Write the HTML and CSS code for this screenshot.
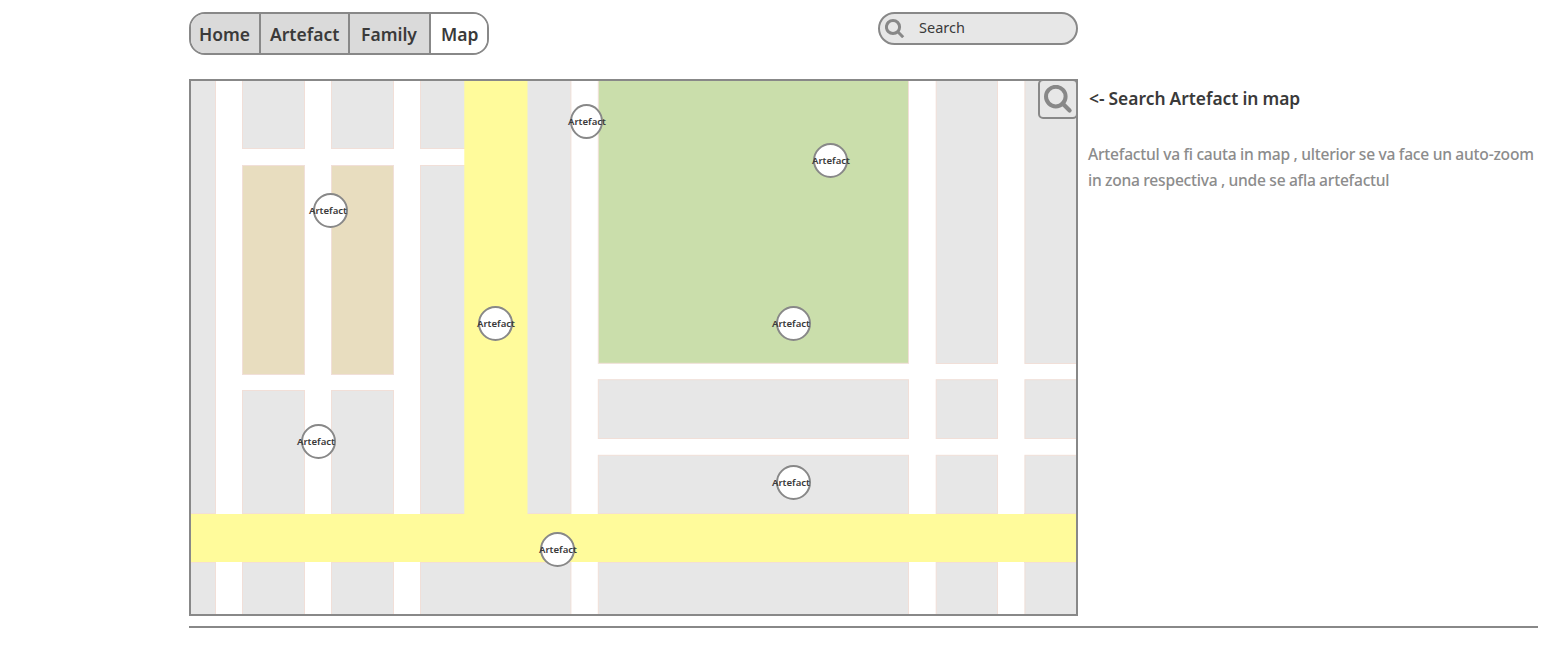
FILE: index.html
```
<!DOCTYPE html>
<html lang="ro">
<head>
<meta charset="utf-8">
<title>Map</title>
<link rel="stylesheet" href="styles.css">
</head>
<body>
<main class="page">
  <header class="topbar">
    <nav class="tabs">
      <a class="tab tab-home"><span>Home</span></a>
      <a class="tab tab-artefact"><span>Artefact</span></a>
      <a class="tab tab-family"><span>Family</span></a>
      <a class="tab tab-map active"><span>Map</span></a>
    </nav>
    <div class="search">
      <svg class="search-icon" viewBox="0 0 20 20"><circle cx="8" cy="9" r="6.6" stroke-width="3"/><path d="M12.8 13.8L18.2 19.2" stroke-width="3"/></svg>
      <span>Search</span>
    </div>
  </header>
  <section class="content">
    <div class="map">
      <svg class="streets" viewBox="0 0 885 533">
        <g class="block">
          <rect x="-1" y="-1" width="25.5" height="535"/>
          <rect x="51.5" y="-1" width="62" height="68.5"/>
          <rect x="140.5" y="-1" width="62" height="68.5"/>
          <rect x="229.5" y="-1" width="62" height="68.5"/>
          <rect x="51.5" y="309.5" width="62" height="225"/>
          <rect x="140.5" y="309.5" width="62" height="225"/>
          <rect x="229.5" y="84.5" width="62" height="348"/>
          <rect x="320.5" y="-1" width="59.4" height="433.5"/>
          <rect x="229.5" y="481.5" width="150.4" height="53"/>
          <rect x="407.3" y="298.7" width="310.2" height="58.8"/>
          <rect x="407.3" y="374.3" width="310.2" height="160"/>
          <rect x="745.2" y="-1" width="61.3" height="283.5"/>
          <rect x="745.2" y="298.7" width="61.3" height="58.8"/>
          <rect x="745.2" y="374.3" width="61.3" height="160"/>
          <rect x="833.9" y="-1" width="60" height="283.5"/>
          <rect x="833.9" y="298.7" width="60" height="58.8"/>
          <rect x="833.9" y="374.3" width="60" height="160"/>
        </g>
        <g class="block square"><rect x="51.5" y="84.5" width="62" height="209"/><rect x="140.5" y="84.5" width="62" height="209"/></g>
        <rect class="block park" x="407.3" y="-1" width="310.2" height="283.3"/>
        <path class="road-edge" d="M0 432.5H25M51 432.5H114M140 432.5H203M229 432.5H380M407 432.5H718M745 432.5H807M833 432.5H885M0 481.5H25M51 481.5H114M140 481.5H203M229 481.5H380M407 481.5H718M745 481.5H807M833 481.5H885"/>
        <path class="avenue" d="M273.3 0H336.5V433H885V481H0V433H273.3Z"/>
      </svg>
      <span class="pin p1"><b>Artefact</b></span>
      <span class="pin p2"><b>Artefact</b></span>
      <span class="pin p3"><b>Artefact</b></span>
      <span class="pin p4"><b>Artefact</b></span>
      <span class="pin p5"><b>Artefact</b></span>
      <span class="pin p6"><b>Artefact</b></span>
      <span class="pin p7"><b>Artefact</b></span>
      <span class="pin p8"><b>Artefact</b></span>
      <button class="map-search" aria-label="Search"><svg viewBox="0 0 30 30"><circle cx="11.8" cy="11.6" r="9.8" stroke-width="4"/><path d="M18.6 18.4L25.6 25.4" stroke-width="4.2" stroke-linecap="round"/></svg></button>
    </div>
    <aside class="notes">
      <h1>&lt;- Search Artefact in map</h1>
      <p><span class="line line-1">Artefactul va fi cauta in map , ulterior se va face un auto-zoom</span><span class="line line-2">in zona respectiva , unde se afla artefactul</span></p>
    </aside>
  </section>
  <hr class="rule">
</main>
</body>
</html>
```

FILE: styles.css
```
* { box-sizing: border-box; }
body {
  margin: 0;
  background: #fff;
  color: #3a3a3a;
  font-family: "Noto Sans", "Open Sans", sans-serif;
}
.page { padding: 12px 0 0 189px; height: 648px; overflow: hidden; }
.topbar { display: flex; justify-content: space-between; align-items: flex-start; width: 889px; height: 67px; }
.tabs {
  display: flex;
  width: 300px;
  height: 43px;
  border: 2px solid #888;
  border-radius: 16px;
  overflow: hidden;
  font-weight: 600;
  font-size: 17.5px;
  line-height: 40px;
}
.tab { background: #dadada; border-right: 2px solid #888; white-space: nowrap; }
.tab-home { width: 70px; padding-left: 8px; }
.tab-artefact { width: 89px; padding-left: 9px; }
.tab-family { width: 81px; padding-left: 11px; }
.tab-map { flex: 1; padding-left: 10px; border-right: 0; }
.tab.active { background: #fff; }
.search {
  display: flex;
  align-items: center;
  gap: 14px;
  width: 200px;
  height: 33px;
  padding: 0 0 1px 5px;
  border: 2px solid #888;
  border-radius: 17px;
  background: #e7e7e7;
  font-size: 14.5px;
}
.search span { padding-bottom: 2px; }
svg { display: block; fill: none; stroke: #888; }
.search-icon { width: 20px; height: 20px; }
.content { display: flex; height: 537px; }
.map { position: relative; flex: none; width: 889px; height: 537px; border: 2px solid #888; overflow: hidden; }
.streets { width: 885px; height: 533px; }
.block { fill: #e7e7e7; stroke: #f1dfd8; stroke-width: 1; }
.square { fill: #e8ddbf; }
.park { fill: #cadeab; }
.road-edge { stroke: #f1dfd8; }
.avenue { fill: #fffb9b; stroke: none; }
.pin {
  position: absolute;
  width: 35px;
  height: 35px;
  border: 2px solid #888;
  border-radius: 50%;
  background: #fff;
}
.pin b { position: absolute; left: -6px; top: 8px; font-size: 9.6px; line-height: 15px; font-weight: 600; }
.p1 { left: 379px; top: 23px; width: 33px; }
.p2 { left: 622px; top: 62px; }
.p3 { left: 122px; top: 112px; }
.p4 { left: 287px; top: 225px; }
.p5 { left: 585px; top: 225px; }
.p6 { left: 110px; top: 343px; }
.p7 { left: 585px; top: 384px; }
.p8 { left: 349px; top: 451px; }
.p2 b, .p4 b, .p8 b { left: -3px; }
.p1 b { left: -4px; }
.map-search {
  position: absolute;
  right: -2px;
  top: -2px;
  display: flex;
  align-items: flex-start;
  width: 40px;
  height: 40px;
  padding: 4px 0 0 4px;
  border: 2px solid #888;
  border-radius: 5px;
  background: #e7e7e7;
}
.map-search svg { flex: none; width: 30px; height: 30px; }
.notes { padding-left: 10px; white-space: nowrap; }
h1 { margin: 6px 0 0 1px; font-size: 17.4px; line-height: 26px; font-weight: 600; word-spacing: -0.5px; }
p { margin: 30px 0 0; color: #8c8c8c; font-size: 15.6px; font-weight: 500; line-height: 26px; letter-spacing: -0.23px; }
.line { display: block; }
.line-1 { word-spacing: -0.2px; }
.line-2 { word-spacing: -0.3px; }
.rule { width: 1349px; height: 2px; margin: 10px 0 0; border: 0; background: #888; }
```
